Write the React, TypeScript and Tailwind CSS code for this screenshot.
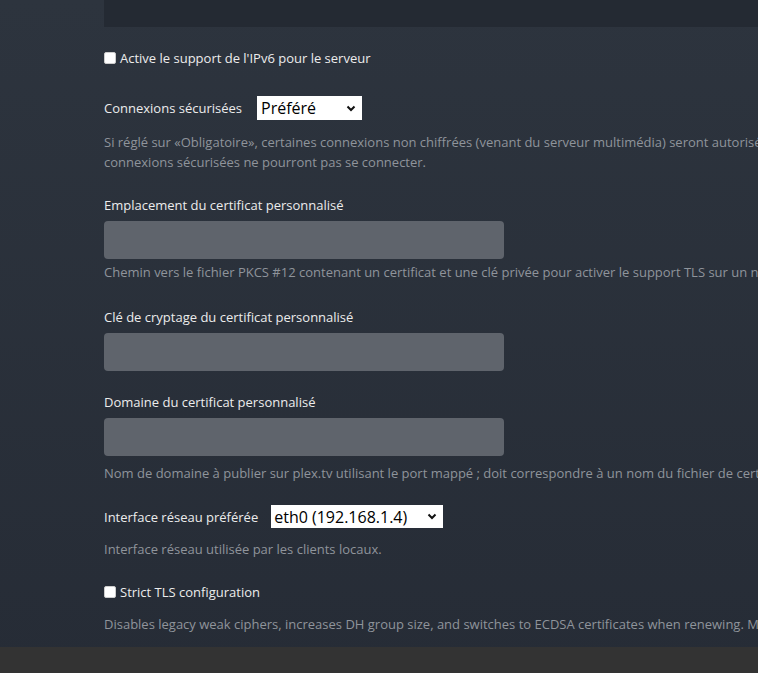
import React from "react";

const font = { fontFamily: '"Open Sans", "Noto Sans", sans-serif' };

function Chevron() {
  return (
    <svg width="10" height="7" viewBox="0 0 10 7" className="shrink-0">
      <path d="M1.5 1.5 L5 5 L8.5 1.5" fill="none" stroke="#111" strokeWidth="2" />
    </svg>
  );
}

function Checkbox() {
  return <span className="inline-block w-[12px] h-[12px] bg-white rounded-[2px] border border-[#ccc] shrink-0" />;
}

function Help({ children }: { children: React.ReactNode }) {
  return <div className="text-[13px] leading-[20px] text-[#8f949b] whitespace-nowrap">{children}</div>;
}

function Label({ children }: { children: React.ReactNode }) {
  return <div className="text-[13px] leading-[18px] text-[#ececec] whitespace-nowrap">{children}</div>;
}

function Input() {
  return <div className="w-[400px] h-[38px] bg-[#5f646c] rounded-[4px]" />;
}

export default function App() {
  return (
    <div style={font} className="w-[758px] h-[673px] overflow-hidden flex flex-col bg-gradient-to-b from-[#2d343e] to-[#262c36]">
      <div className="flex-1 pl-[104px] overflow-hidden">
        <div className="h-[27px] bg-[#242a33]" />
        <div className="mt-[22px] flex items-center gap-[4px] h-[18px]">
          <Checkbox />
          <Label>Active le support de l'IPv6 pour le serveur</Label>
        </div>
        <div className="mt-[29px] flex items-center h-[24px]">
          <Label>Connexions sécurisées</Label>
          <div className="ml-[15px] w-[105px] h-[24px] bg-white flex items-center justify-between pl-[4px] pr-[6px] text-[16px] text-black">
            <span>Préféré</span>
            <Chevron />
          </div>
        </div>
        <div className="mt-[12px]">
          <Help>
            Si réglé sur «Obligatoire», certaines connexions non chiffrées (venant du serveur multimédia) seront autorisées, et les appareils ne supportant pas les
          </Help>
          <Help>connexions sécurisées ne pourront pas se connecter.</Help>
        </div>
        <div className="mt-[24px]">
          <Label>Emplacement du certificat personnalisé</Label>
        </div>
        <div className="mt-[7px]">
          <Input />
        </div>
        <div className="mt-[3px]">
          <Help>Chemin vers le fichier PKCS #12 contenant un certificat et une clé privée pour activer le support TLS sur un nom de domaine personnalisé.</Help>
        </div>
        <div className="mt-[26px]">
          <Label>Clé de cryptage du certificat personnalisé</Label>
        </div>
        <div className="mt-[7px]">
          <Input />
        </div>
        <div className="mt-[22px]">
          <Label>Domaine du certificat personnalisé</Label>
        </div>
        <div className="mt-[7px]">
          <Input />
        </div>
        <div className="mt-[7px]">
          <Help>Nom de domaine à publier sur plex.tv utilisant le port mappé ; doit correspondre à un nom du fichier de certificat personnalisé.</Help>
        </div>
        <div className="mt-[22px] flex items-center h-[23px]">
          <Label>Interface réseau préférée</Label>
          <div className="ml-[13px] w-[172px] h-[23px] bg-white flex items-center justify-between pl-[3px] pr-[6px] text-[16px] text-black">
            <span>eth0 (192.168.1.4)</span>
            <Chevron />
          </div>
        </div>
        <div className="mt-[11px]">
          <Help>Interface réseau utilisée par les clients locaux.</Help>
        </div>
        <div className="mt-[24px] flex items-center gap-[4px] h-[18px]">
          <Checkbox />
          <Label>Strict TLS configuration</Label>
        </div>
        <div className="mt-[13px]">
          <Help>Disables legacy weak ciphers, increases DH group size, and switches to ECDSA certificates when renewing. May break connections with older clients.</Help>
        </div>
      </div>
      <div className="h-[26px] bg-[#333333] shrink-0" />
    </div>
  );
}
